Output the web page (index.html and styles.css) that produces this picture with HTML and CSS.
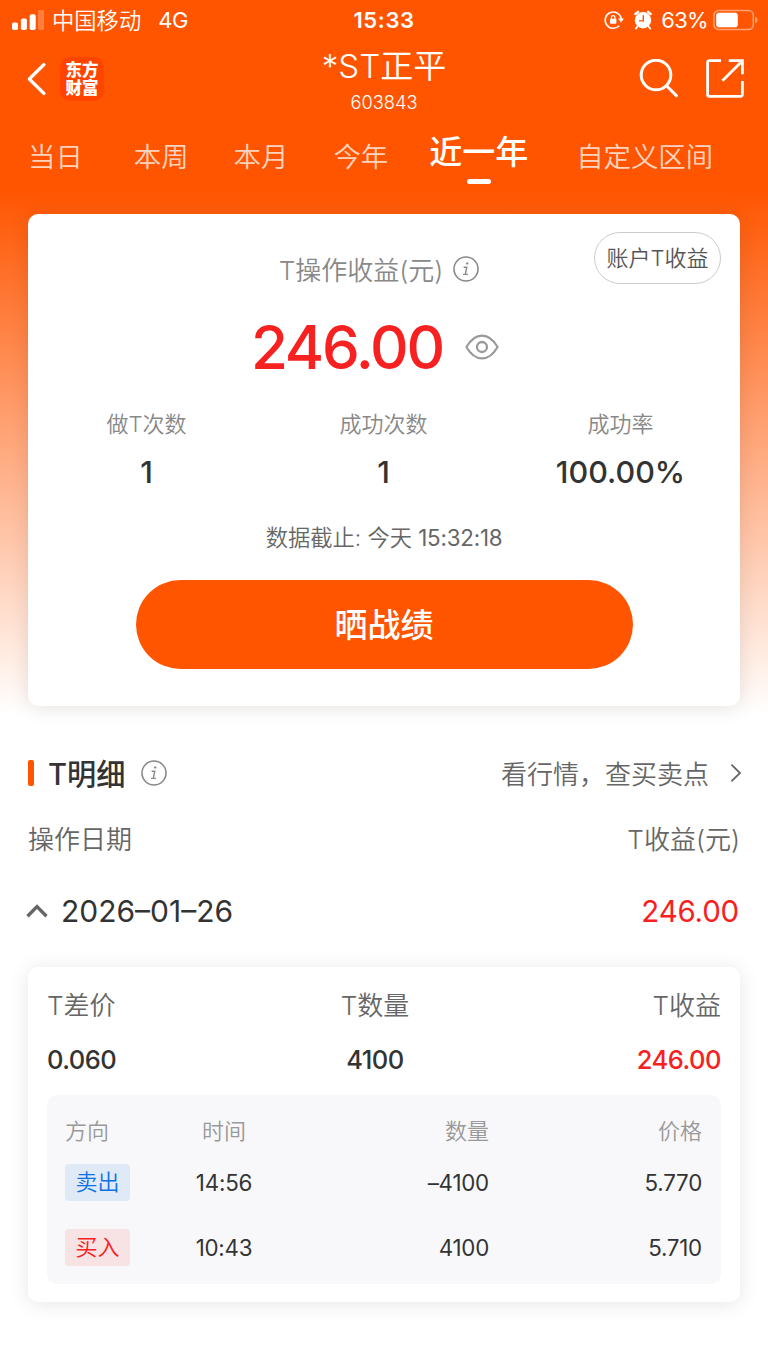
FILE: index.html
```html
<!DOCTYPE html>
<html lang="zh-CN">
<head>
  <meta charset="UTF-8">
  <meta name="viewport" content="width=device-width, initial-scale=1.0">
  <title>T操作收益</title>
  <link rel="stylesheet" href="styles.css">
</head>
<body>
  <header class="header">
    <div class="status-bar">
      <div class="status-left">
        <svg class="signal" width="32" height="20" viewBox="0 0 32 20" fill="#fff">
          <rect x="0" y="12.5" width="6" height="7.5" rx="1.8"/>
          <rect x="8.9" y="8.5" width="6" height="11.5" rx="1.8"/>
          <rect x="17.7" y="4.3" width="6" height="15.7" rx="1.8"/>
          <rect x="26" y="0" width="6" height="20" rx="1.8" opacity=".25"/>
        </svg>
        <span class="carrier">中国移动</span>
        <span class="network">4G</span>
      </div>
      <div class="clock">15:33</div>
      <div class="status-right">
        <svg width="20" height="20" viewBox="0 0 20 20" fill="none" stroke="#fff" stroke-width="1.6">
          <path d="M15.2 15.7A8.1 8.1 0 1 1 17.3 9"/>
          <path d="M14 8.5h6l-3 4z" fill="#fff" stroke="none"/>
          <rect x="6" y="8.8" width="6.4" height="5" rx=".8" fill="#fff" stroke="none"/>
          <path d="M7.4 9V7.4a1.8 1.8 0 0 1 3.6 0V9" stroke-width="1.2"/>
        </svg>
        <svg class="alarm" width="18" height="20" viewBox="0 0 18 20">
          <circle cx="9" cy="10.3" r="8.2" fill="#fff"/>
          <path d="M1.4 4 4 1.8M16.6 4 14 1.8" stroke="#fff" stroke-width="2.4" stroke-linecap="round"/>
          <path d="M3.4 16.5 1.8 18.6M14.6 16.5l1.6 2.1" stroke="#fff" stroke-width="1.8" stroke-linecap="round"/>
          <path d="M9.3 5.2v5.7H5" stroke="#ff5500" stroke-width="1.4" fill="none"/>
        </svg>
        <span class="percent">63%</span>
        <svg class="battery" width="45" height="22" viewBox="0 0 45 22">
          <rect x=".9" y="1.4" width="39.4" height="19.2" rx="5" fill="none" stroke="#fff" stroke-opacity=".45" stroke-width="1.5"/>
          <rect x="3.2" y="3.8" width="21.6" height="14.4" rx="2.8" fill="#fff"/>
          <path d="M42 7.6q2.6 1 2.6 3.4T42 14.4z" fill="#fff" opacity=".45"/>
        </svg>
      </div>
    </div>

    <div class="nav">
      <div class="nav-left">
        <svg width="20" height="34" viewBox="0 0 20 34" fill="none" stroke="#fff" stroke-width="3.2" stroke-linecap="round" stroke-linejoin="round">
          <path d="M17 2.5 2.3 17 17 31.5"/>
        </svg>
        <div class="logo">东方<br>财富</div>
      </div>
      <div class="stock">
        <div class="stock-name">*ST正平</div>
        <div class="stock-code">603843</div>
      </div>
      <div class="nav-right">
        <svg width="40" height="40" viewBox="0 0 40 40" fill="none" stroke="#fff" stroke-width="3" stroke-linecap="round">
          <circle cx="17" cy="16" r="14.8"/>
          <path d="M28 27.2 37.4 36.6"/>
        </svg>
        <svg width="40" height="40" viewBox="0 0 40 40" fill="none" stroke="#fff" stroke-width="2.8">
          <path d="M16 1.7H4.4a1.8 1.8 0 0 0-1.8 1.8v32a1.8 1.8 0 0 0 1.8 1.8h31.2a1.8 1.8 0 0 0 1.8-1.8V22"/>
          <path d="M23.7 1.7h13.7v13.6M37.2 2 17.4 21.8"/>
        </svg>
      </div>
    </div>

    <div class="tabs">
      <span class="tab tab-day">当日</span>
      <span class="tab">本周</span>
      <span class="tab">本月</span>
      <span class="tab">今年</span>
      <span class="tab tab-active">近一年</span>
      <span class="tab tab-custom">自定义区间</span>
    </div>
  </header>

  <section class="card summary">
    <div class="account-btn">账户T收益</div>
    <div class="summary-title">
      <span>T操作收益(元)</span>
      <svg width="26" height="26" viewBox="0 0 26 26" fill="none" stroke="#8a8a8a">
        <circle cx="13" cy="13" r="12" stroke-width="1.6"/>
        <path d="M10.6 11.2h3.2l-1.5 7.2h2.6M10 18.4h2.5" stroke-width="1.4"/>
        <circle cx="14.2" cy="7.4" r="1.2" fill="#8a8a8a" stroke="none"/>
      </svg>
    </div>
    <div class="profit">
      <span class="profit-value">246.00</span>
      <svg width="34" height="26" viewBox="0 0 34 26" fill="none" stroke="#999" stroke-width="2.1">
        <path d="M1.4 13C6 5 11 1.6 17 1.6S28 5 32.6 13C28 21 23 24.4 17 24.4S6 21 1.4 13z" stroke-linejoin="round"/>
        <circle cx="17" cy="13" r="5" stroke-width="2.3"/>
      </svg>
    </div>
    <div class="stats">
      <div class="stat"><span class="stat-label">做T次数</span><span class="stat-value">1</span></div>
      <div class="stat"><span class="stat-label">成功次数</span><span class="stat-value">1</span></div>
      <div class="stat"><span class="stat-label">成功率</span><span class="stat-value">100.00%</span></div>
    </div>
    <div class="deadline">数据截止: 今天 <span class="deadline-time">15:32:18</span></div>
    <div class="share-btn">晒战绩</div>
  </section>

  <section class="detail">
    <div class="detail-head">
      <div class="detail-title">
        <span class="bar"></span>
        <span class="detail-name">T明细</span>
        <svg width="26" height="26" viewBox="0 0 26 26" fill="none" stroke="#8a8a8a">
          <circle cx="13" cy="13" r="12" stroke-width="1.6"/>
          <path d="M10.6 11.2h3.2l-1.5 7.2h2.6M10 18.4h2.5" stroke-width="1.4"/>
          <circle cx="14.2" cy="7.4" r="1.2" fill="#8a8a8a" stroke="none"/>
        </svg>
      </div>
      <div class="market-link">
        <span>看行情，查买卖点</span>
        <svg width="12" height="20" viewBox="0 0 12 20" fill="none" stroke="#666" stroke-width="1.8">
          <path d="M1.4 1.6 10 10 1.4 18.4"/>
        </svg>
      </div>
    </div>
    <div class="row columns">
      <span>操作日期</span>
      <span>T收益(元)</span>
    </div>
    <div class="row day">
      <div class="date">
        <svg width="22" height="14" viewBox="0 0 22 14" fill="none" stroke="#666" stroke-width="3.4">
          <path d="M1.5 12.3 11 2.6l9.5 9.7"/>
        </svg>
        <span>2026–01–26</span>
      </div>
      <span class="day-profit red">246.00</span>
    </div>
  </section>

  <section class="card trade">
    <div class="trade-row trade-labels">
      <span>T差价</span><span>T数量</span><span>T收益</span>
    </div>
    <div class="trade-row trade-values">
      <span>0.060</span><span>4100</span><span class="red">246.00</span>
    </div>
    <div class="orders">
      <div class="order order-head">
        <span>方向</span><span>时间</span><span>数量</span><span>价格</span>
      </div>
      <div class="order">
        <span><b class="tag sell">卖出</b></span><span>14:56</span><span>–4100</span><span>5.770</span>
      </div>
      <div class="order">
        <span><b class="tag buy">买入</b></span><span>10:43</span><span>4100</span><span>5.710</span>
      </div>
    </div>
  </section>
</body>
</html>
```
FILE: styles.css
```css
* {
  box-sizing: border-box;
}
body {
  margin: 0;
  min-height: 1366px;
  font-family: Inter, "Noto Sans CJK SC", sans-serif;
  font-weight: 350;
  color: #333;
  white-space: nowrap;
  background: #fff linear-gradient(to bottom, #ff5500 0, #ff5500 190px, #fff 715px) no-repeat;
}
svg {
  display: block;
  flex: none;
}
.red {
  color: #f72121;
}

/* header */
.header {
  height: 214px;
  color: #fff;
}
.status-bar {
  display: grid;
  grid-template-columns: 1fr auto 1fr;
  align-items: center;
  height: 39px;
  padding: 0 10px;
  font-size: 22.3px;
}
.status-left,
.status-right {
  display: flex;
  align-items: center;
}
.status-right {
  justify-content: flex-end;
}
.signal {
  margin: 0 8px 0 2px;
}
.carrier {
  padding-bottom: 2px;
}
.network {
  margin-left: 17px;
  font-size: 22px;
  font-weight: 400;
  letter-spacing: -0.3px;
}
.clock {
  font-size: 22px;
  font-weight: 600;
  letter-spacing: 0.6px;
}
.alarm {
  margin: 0 9px 0 10px;
}
.percent {
  font-size: 22px;
  font-weight: 400;
  letter-spacing: -0.7px;
}
.battery {
  margin-left: 5px;
}
.nav {
  display: grid;
  grid-template-columns: 1fr auto 1fr;
  height: 81px;
  padding: 0 23px;
}
.nav-left {
  display: flex;
  align-items: center;
  gap: 13px;
  height: 79px;
  margin-left: 4px;
}
.logo {
  width: 44px;
  height: 44px;
  padding-top: 4px;
  border-radius: 10px;
  background: #ff4400;
  font-size: 16.5px;
  font-weight: 900;
  line-height: 18px;
  text-align: center;
}
.stock {
  text-align: center;
}
.stock-name {
  margin-top: 7px;
  font-size: 33px;
  line-height: 40px;
}
.stock-code {
  margin-top: 5px;
  font-size: 18.3px;
  line-height: 22px;
}
.nav-right {
  display: flex;
  justify-content: flex-end;
  align-items: center;
  gap: 26px;
  height: 79px;
}
.tabs {
  display: flex;
  gap: 45px;
  padding: 10px 28px 0;
  font-size: 27.4px;
  line-height: 54px;
}
.tab {
  color: rgba(255, 255, 255, 0.75);
}
.tab-day {
  margin-right: 6px;
}
.tab-active {
  display: flex;
  flex-direction: column;
  align-items: center;
  margin-left: -4px;
  color: #fff;
  font-size: 33px;
  font-weight: 500;
  line-height: 44px;
}
.tab-active::after {
  content: "";
  width: 24px;
  height: 5px;
  margin-top: 5px;
  border-radius: 3px;
  background: #fff;
}
.tab-custom {
  margin-left: 3px;
}

/* summary card */
.card {
  margin: 0 28px;
  border-radius: 10px;
  background: #fff;
  box-shadow: 0 2px 20px rgba(0, 0, 0, 0.1);
}
.summary {
  position: relative;
  height: 492px;
  padding-top: 36px;
}
.account-btn {
  position: absolute;
  top: 18px;
  right: 19px;
  width: 127px;
  height: 52px;
  border: 1px solid #ccc;
  border-radius: 26px;
  font-size: 22px;
  line-height: 51px;
  text-align: center;
  color: #555;
}
.summary-title {
  display: flex;
  align-items: center;
  justify-content: center;
  gap: 10px;
  height: 38px;
  margin-right: 10px;
  font-size: 26px;
  color: #888;
}
.summary-title span {
  padding-bottom: 2px;
}
.profit {
  display: flex;
  align-items: center;
  height: 90px;
  margin: 14px 0 0 223px;
  gap: 22px;
}
.profit-value {
  color: #f72121;
  font-size: 60px;
  font-weight: 500;
  letter-spacing: -2.2px;
}
.stats {
  display: grid;
  grid-template-columns: repeat(3, 1fr);
  margin: 14px 1px 0 0;
  text-align: center;
}
.stat {
  display: flex;
  flex-direction: column;
}
.stat-label {
  font-size: 22px;
  line-height: 36px;
  color: #888;
}
.stat-value {
  margin-top: 10px;
  font-size: 30.5px;
  font-weight: 500;
  line-height: 40px;
}
.deadline {
  margin-top: 28px;
  font-size: 22.3px;
  line-height: 36px;
  text-align: center;
  color: #666;
}
.deadline-time {
  font-weight: 400;
  letter-spacing: -0.2px;
}
.share-btn {
  width: 497px;
  height: 89px;
  margin: 24px auto 0;
  border-radius: 45px;
  background: #ff5500;
  color: #fff;
  font-size: 33px;
  font-weight: 500;
  line-height: 91px;
  text-align: center;
}

/* detail list */
.detail {
  padding: 40px 28px 0;
}
.detail-head,
.row {
  display: flex;
  justify-content: space-between;
  align-items: center;
}
.detail-head {
  height: 54px;
}
.detail-title {
  display: flex;
  align-items: center;
  font-size: 29.2px;
  font-weight: 500;
}
.detail-name {
  padding-bottom: 3px;
}
.bar {
  width: 6px;
  height: 26px;
  margin-right: 14px;
  border-radius: 2px;
  background: #ff5500;
}
.detail-title svg {
  margin-left: 16px;
}
.market-link {
  display: flex;
  align-items: center;
  gap: 21px;
  margin-right: -2px;
  font-size: 26px;
  color: #666;
}
.market-link span {
  padding-bottom: 2px;
}
.columns {
  height: 74px;
  font-size: 26px;
  color: #666;
}
.day {
  height: 73px;
  font-size: 30px;
  font-weight: 400;
}
.day-profit {
  margin-right: 1px;
  font-size: 29.5px;
  letter-spacing: -0.2px;
}
.date {
  display: flex;
  align-items: center;
  gap: 13px;
  margin-left: -2px;
}

/* trade card */
.trade {
  height: 335px;
  margin-top: 20px;
  padding: 19px 19px 18px;
}
.trade-row {
  display: grid;
  grid-template-columns: 220px 216px 1fr;
}
.trade-row span:nth-child(2) {
  text-align: center;
}
.trade-row span:last-child {
  text-align: right;
}
.trade-labels {
  font-size: 26px;
  line-height: 40px;
  color: #666;
}
.trade-values {
  margin-top: 15px;
  font-size: 25.5px;
  font-weight: 500;
  line-height: 38px;
  letter-spacing: -0.5px;
}
.orders {
  height: 189px;
  margin-top: 16px;
  padding: 13px 19px 0 18px;
  border-radius: 10px;
  background: #f8f8fa;
}
.order {
  display: grid;
  grid-template-columns: 130px 58px 1fr 213px;
  align-items: center;
  height: 65px;
  font-size: 22.3px;
  font-weight: 400;
  letter-spacing: -0.2px;
  text-align: right;
}
.order span:first-child {
  text-align: left;
}
.order span:nth-child(2) {
  text-align: center;
}
.order-head {
  height: 42px;
  padding-bottom: 1px;
  font-size: 22px;
  font-weight: 350;
  letter-spacing: 0;
  color: #999;
}
.tag {
  display: block;
  width: 65px;
  height: 37px;
  border-radius: 4px;
  font-size: 22px;
  font-weight: 350;
  line-height: 37px;
  letter-spacing: 0;
  text-align: center;
}
.sell {
  background: #e0eaf7;
  color: #0f71e6;
}
.buy {
  background: #f7e2e4;
  color: #f72121;
}
```
